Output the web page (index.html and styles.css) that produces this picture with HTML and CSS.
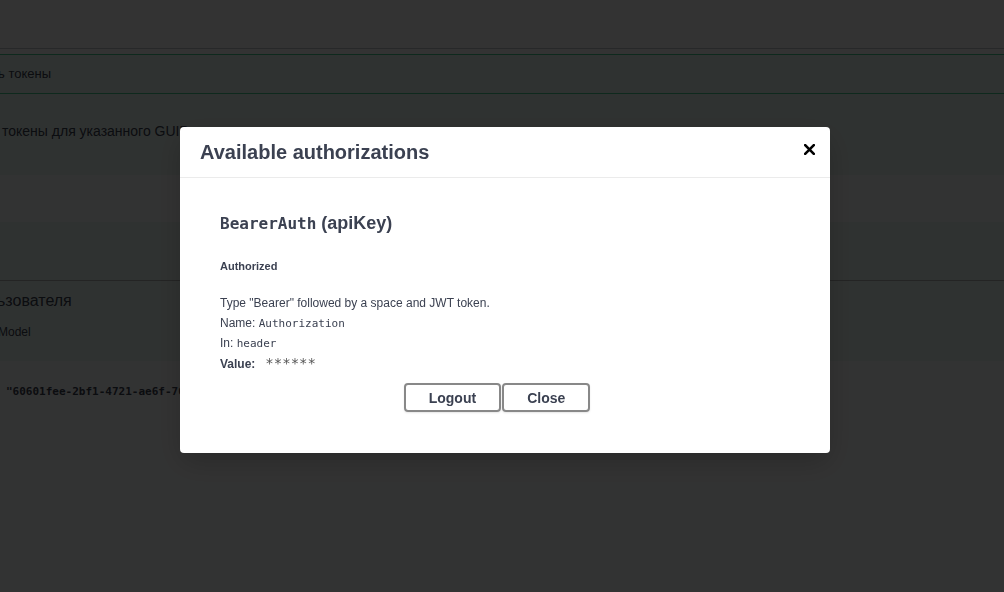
FILE: index.html
```html
<!DOCTYPE html>
<html lang="ru">
<head>
<meta charset="utf-8">
<title>Swagger UI</title>
<link rel="stylesheet" href="styles.css">
</head>
<body>
<div class="page">
  <div class="topbar"></div>
  <div class="opblock">
    <div class="summary"><span class="summary-desc">ь токены</span></div>
    <div class="desc"><p>токены для указанного GUID</p></div>
    <div class="section-header"></div>
    <div class="params"></div>
    <div class="responses">
      <div class="resp-title">ьзователя</div>
      <div class="resp-tabs">Model</div>
    </div>
    <div class="example">
      <code class="example-code">"60601fee-2bf1-4721-ae6f-76a1b2c3d4e5"</code>
    </div>
  </div>
</div>

<div class="overlay">
  <div class="modal">
    <div class="modal-header">
      <h3 class="modal-title">Available authorizations</h3>
      <button class="close-btn" aria-label="Close">
        <svg width="11" height="11" viewBox="0 0 11 11"><path d="M1.2 1.2 L9.8 9.8 M9.8 1.2 L1.2 9.8" stroke="#000" stroke-width="2.6" stroke-linecap="square"/></svg>
      </button>
    </div>
    <div class="modal-body">
      <div class="auth-container">
        <h4 class="auth-name"><code class="mono-title">BearerAuth</code> (apiKey)</h4>
        <h6 class="auth-status">Authorized</h6>
        <p class="line line-desc">Type "Bearer" followed by a space and JWT token.</p>
        <p class="line">Name: <code class="mono">Authorization</code></p>
        <p class="line line-in">In: <code class="mono">header</code></p>
        <div class="value-row"><label class="value-label">Value:</label><code class="stars">******</code></div>
        <div class="btn-wrapper">
          <button class="btn">Logout</button>
          <button class="btn btn-done">Close</button>
        </div>
      </div>
    </div>
  </div>
</div>
</body>
</html>
```

FILE: styles.css
```css
html, body {
  margin: 0;
  padding: 0;
  width: 1004px;
  height: 592px;
  overflow: hidden;
  background: #fff;
  font-family: "Liberation Sans", Arial, sans-serif;
  color: #3b4151;
}

.page {
  height: 592px;
  overflow: hidden;
}

.topbar {
  height: 48px;
  border-bottom: 1px solid rgba(59, 65, 81, 0.3);
  margin-bottom: 5px;
}

.opblock {
  margin: 0 -20px;
  border: 1px solid #49cc90;
  border-bottom: none;
  background: rgba(73, 204, 144, 0.1);
  height: 560px;
  display: flex;
  flex-direction: column;
}

.summary {
  height: 38px;
  border-bottom: 1px solid #49cc90;
  display: flex;
  align-items: center;
  padding-left: 17px;
  padding-bottom: 1px;
  box-sizing: border-box;
  height: 39px;
}

.summary-desc {
  font-size: 13px;
}

.desc {
  height: 81px;
  display: flex;
  align-items: center;
  padding-left: 21px;
}

.desc p {
  margin: 0 0 8px;
  font-size: 14px;
}

.section-header {
  height: 47px;
  background: rgba(255, 255, 255, 0.8);
}

.params {
  height: 58px;
  border-bottom: 1px solid #b4b4b4;
}

.responses {
  height: 80px;
  padding-left: 16px;
}

.resp-title {
  font-size: 16px;
  line-height: 18px;
  margin-top: 11px;
}

.resp-tabs {
  font-size: 12px;
  line-height: 14px;
  margin-top: 15px;
  margin-left: 1px;
}

.example {
  flex: 1;
  background: rgba(255, 255, 255, 0.8);
  padding-left: 25px;
}

.example-code {
  display: block;
  margin-top: 24px;
  font-family: "DejaVu Sans Mono", "Liberation Mono", monospace;
  font-size: 11px;
  font-weight: bold;
  line-height: 14px;
}

.overlay {
  position: fixed;
  inset: 0;
  background: rgba(0, 0, 0, 0.8);
  padding: 127px 0 0 180px;
}

.modal {
  width: 650px;
  background: #fff;
  border-radius: 4px;
  box-shadow: 0 10px 30px rgba(0, 0, 0, 0.2);
}

.modal-header {
  height: 50px;
  border-bottom: 1px solid #ebebeb;
  display: flex;
  align-items: center;
  justify-content: space-between;
  padding: 0 15px 0 20px;
}

.modal-title {
  margin: 0;
  font-size: 20px;
  font-weight: bold;
  color: #3b4151;
}

.close-btn {
  border: none;
  background: none;
  padding: 0;
  width: 11px;
  height: 11px;
  margin-bottom: 5px;
  display: flex;
}

.modal-body {
  padding: 20px;
}

.auth-container {
  padding: 10px 20px 10px 20px;
}

.auth-name {
  margin: 4px 0 0;
  font-size: 18px;
  line-height: 22px;
  font-weight: bold;
  color: #3b4151;
}

.mono-title {
  font-family: "DejaVu Sans Mono", "Liberation Mono", monospace;
  font-size: 16px;
  font-weight: bold;
}

.auth-status {
  margin: 24px 0 0;
  font-size: 11px;
  line-height: 14px;
  font-weight: bold;
}

.line {
  margin: 0;
  font-size: 12px;
  line-height: 20px;
}

.line-desc {
  margin-top: 20px;
}

.line-in {
  line-height: 19px;
}

.mono {
  font-family: "DejaVu Sans Mono", "Liberation Mono", monospace;
  font-size: 11px;
}

.value-row {
  height: 22px;
  display: flex;
  align-items: center;
}

.value-label {
  font-size: 12px;
  font-weight: bold;
}

.stars {
  margin-left: 10px;
  margin-top: -3px;
  font-family: "DejaVu Sans Mono", "Liberation Mono", monospace;
  font-size: 14px;
  color: #555;
}

.btn-wrapper {
  display: flex;
  justify-content: center;
  gap: 1px;
  padding: 8px 0 11px;
}

.btn {
  height: 29px;
  padding: 0 23px;
  border: 2px solid #888;
  border-radius: 4px;
  background: transparent;
  box-shadow: 0 1px 2px rgba(0, 0, 0, 0.1);
  font-family: "Liberation Sans", Arial, sans-serif;
  font-size: 14px;
  font-weight: bold;
  color: #3b4151;
}

.btn-done {
  margin-right: 16px;
}
```
